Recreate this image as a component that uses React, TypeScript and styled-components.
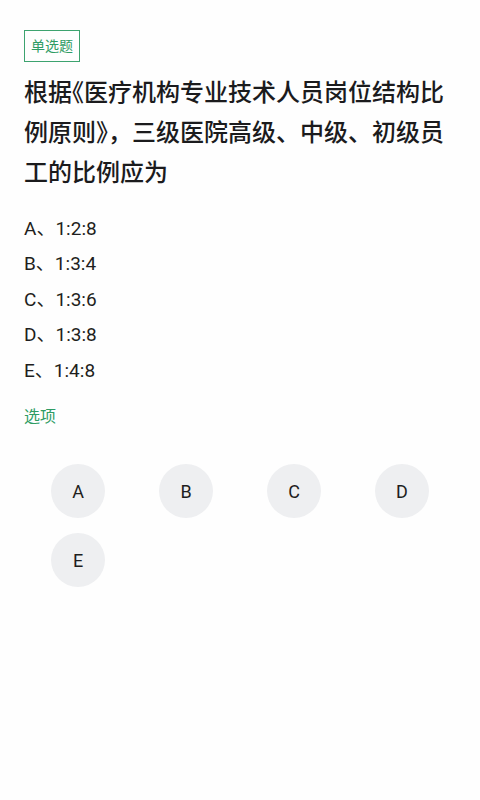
import React from "react";
import styled, { createGlobalStyle } from "styled-components";

const Global = createGlobalStyle`
  html, body { margin: 0; padding: 0; background: #fefefe; }
  body { font-family: Roboto, "Noto Sans CJK SC", sans-serif; }
`;

const Page = styled.div`
  min-height: 800px;
  box-sizing: border-box;
  padding: 30px 24px 40px;
  background: #fefefe;
  display: flex;
  flex-direction: column;
  align-items: flex-start;
`;

const Tag = styled.div`
  box-sizing: border-box;
  height: 32px;
  padding: 0 6px;
  border: 1.5px solid #3da36f;
  color: #2f9c64;
  font-size: 14px;
  line-height: 29px;
  font-family: "Noto Sans CJK SC", sans-serif;
`;

const Title = styled.h1`
  margin: 11px 0 0;
  font-size: 24px;
  font-weight: 500;
  line-height: 40px;
  color: #1b1b1d;
  font-family: Roboto, "Noto Sans CJK SC", sans-serif;
`;

const Narrow = styled.span`
  font-feature-settings: "halt" 1;
`;

const Options = styled.div`
  margin-top: 18px;
  display: flex;
  flex-direction: column;
`;

const Option = styled.div`
  font-size: 19px;
  line-height: 35.4px;
  color: #1e1e20;
  font-family: Roboto, "Noto Sans CJK SC", sans-serif;
`;

const Label = styled.div`
  margin-top: 15px;
  font-size: 16px;
  line-height: 24px;
  color: #2f9c64;
  font-family: "Noto Sans CJK SC", sans-serif;
`;

const Grid = styled.div`
  align-self: stretch;
  margin-top: 37px;
  display: grid;
  grid-template-columns: repeat(4, 1fr);
  row-gap: 15px;
  justify-items: center;
`;

const Choice = styled.button`
  width: 54px;
  height: 54px;
  border-radius: 50%;
  border: none;
  padding: 0;
  background: #eeeff1;
  color: #1e1e20;
  font-size: 18px;
  font-family: Roboto, sans-serif;
  display: flex;
  align-items: center;
  justify-content: center;
`;

const options = [
  ["A", "1:2:8"],
  ["B", "1:3:4"],
  ["C", "1:3:6"],
  ["D", "1:3:8"],
  ["E", "1:4:8"],
];

export default function App() {
  return (
    <>
      <Global />
      <Page>
        <Tag>单选题</Tag>
        <Title>
          根据<Narrow>《</Narrow>医疗机构专业技术人员岗位结构比例原则<Narrow>》</Narrow>，三级医院高级、中级、初级员工的比例应为
        </Title>
        <Options>
          {options.map(([k, v]) => (
            <Option key={k}>
              {k}、{v}
            </Option>
          ))}
        </Options>
        <Label>选项</Label>
        <Grid>
          {options.map(([k]) => (
            <Choice key={k}>{k}</Choice>
          ))}
        </Grid>
      </Page>
    </>
  );
}
